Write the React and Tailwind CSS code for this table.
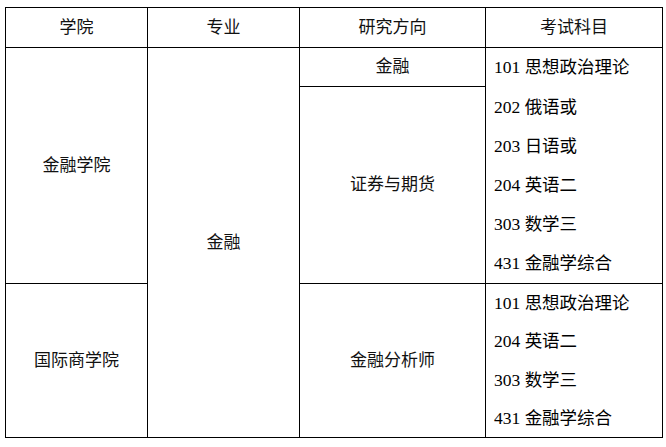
const font = { fontFamily: '"Liberation Serif", "Noto Sans CJK SC", serif' };

const Cell = ({ className = '', children }) => (
  <div
    className={`border-r border-b border-black flex items-center justify-center text-[17px] text-[#111] ${className}`}
  >
    {children}
  </div>
);

const Subjects = ({ items, className = '' }) => (
  <div className={`border-r border-b border-black flex flex-col ${className}`}>
    {items.map((s) => (
      <div key={s} className="flex-1 flex items-center pl-2 text-[17.5px] text-black whitespace-nowrap">
        {s}
      </div>
    ))}
  </div>
);

export default function App() {
  return (
    <div className="w-[666px] h-[447px] bg-white pt-[7px] pl-[5px]" style={font}>
      <div className="grid grid-cols-[142px_152px_186px_177px] grid-rows-[40px_39px_197px_154px] border-l border-t border-black w-[658px]">
        <Cell className="col-start-1 row-start-1">学院</Cell>
        <Cell className="col-start-2 row-start-1">专业</Cell>
        <Cell className="col-start-3 row-start-1">研究方向</Cell>
        <Cell className="col-start-4 row-start-1">考试科目</Cell>

        <Cell className="col-start-1 row-start-2 row-span-2">金融学院</Cell>
        <Cell className="col-start-2 row-start-2 row-span-3">金融</Cell>
        <Cell className="col-start-3 row-start-2">金融</Cell>
        <Cell className="col-start-3 row-start-3">证券与期货</Cell>
        <Subjects
          className="col-start-4 row-start-2 row-span-2"
          items={['101 思想政治理论', '202 俄语或', '203 日语或', '204 英语二', '303 数学三', '431 金融学综合']}
        />

        <Cell className="col-start-1 row-start-4">国际商学院</Cell>
        <Cell className="col-start-3 row-start-4">金融分析师</Cell>
        <Subjects
          className="col-start-4 row-start-4"
          items={['101 思想政治理论', '204 英语二', '303 数学三', '431 金融学综合']}
        />
      </div>
    </div>
  );
}
